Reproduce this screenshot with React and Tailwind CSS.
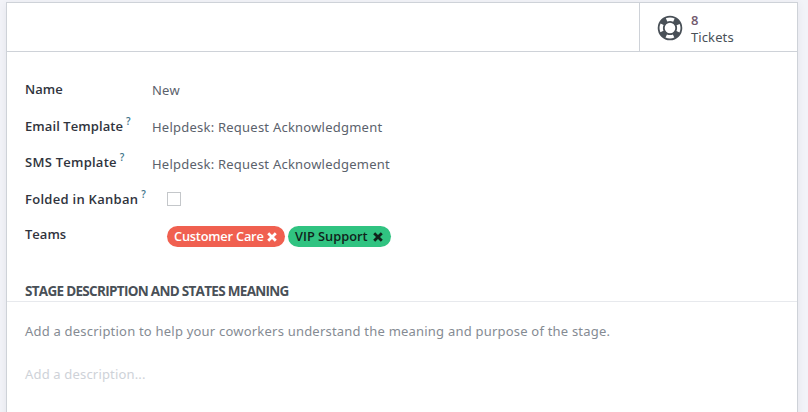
import React from 'react';

function LifeRing() {
  return (
    <svg width="26" height="26" viewBox="0 0 26 26" fill="none" stroke="#495057">
      <circle cx="13" cy="13" r="8.8" strokeWidth="7" />
      <circle cx="13" cy="13" r="8.8" stroke="#fff" strokeWidth="3.4" strokeDasharray="7.6 6.223" strokeDashoffset="3.8" />
    </svg>
  );
}

function Cross() {
  return (
    <svg width="10" height="10" viewBox="0 0 10 10" stroke="currentColor" strokeWidth="2.8">
      <path d="M1.2 1.2 8.8 8.8M8.8 1.2 1.2 8.8" />
    </svg>
  );
}

function Row({ label, help, className = '', labelClass = '', children }) {
  return (
    <div className={`flex ${className}`}>
      <div className="flex w-[127px] shrink-0 whitespace-nowrap leading-5">
        <span className={`font-semibold text-[#30343d] ${labelClass}`}>{label}</span>
        {help && <span className="-mt-[5px] ml-[3px] text-[10px] font-semibold text-[#3d7389]">?</span>}
      </div>
      {children}
    </div>
  );
}

function Value({ children, className = 'mt-px' }) {
  return <span className={`font-['Noto_Sans',sans-serif] leading-5 tracking-[0.23px] ${className}`}>{children}</span>;
}

function Tag({ children, className }) {
  return (
    <span className={`flex h-[21px] items-center justify-between rounded-full pr-2 pl-[7px] text-[12.8px] font-semibold leading-5 whitespace-nowrap ${className}`}>
      <span className="-mt-px">{children}</span>
      <Cross />
    </span>
  );
}

export default function App() {
  return (
    <div className="h-[412px] w-[808px] overflow-hidden bg-[#f2f3f8] pt-0.5 pl-1.5 font-['Open_Sans','Noto_Sans',sans-serif] text-[13px] text-[#5b626c]">
      <main className="h-[430px] w-[792px] border border-[#ced2d8] bg-white shadow-[0_2px_8px_rgba(60,65,90,0.08)]">
        <header className="flex h-[49px] justify-end border-b border-[#ced2d8]">
          <button className="flex w-[158px] items-center border-l border-[#ced2d8] pt-0.5 pl-[17px] text-left">
            <LifeRing />
            <span className="mt-px ml-2 flex flex-col leading-[17px]">
              <span className="font-semibold text-[#71596d]">8</span>
              <span className="font-['Noto_Sans',sans-serif] tracking-[0.1px] text-[#495057]">Tickets</span>
            </span>
          </button>
        </header>
        <section className="px-[18px] pt-[27px]">
          <Row label="Name" className="h-[37px]"><Value>New</Value></Row>
          <Row label="Email Template" labelClass="tracking-[0.08px]" help className="h-9"><Value>Helpdesk: Request Acknowledgment</Value></Row>
          <Row label="SMS Template" labelClass="tracking-[0.25px]" help className="h-[37px]"><Value className="mt-0.5">Helpdesk: Request Acknowledgement</Value></Row>
          <Row label="Folded in Kanban" labelClass="tracking-[0.28px]" help className="h-[35px]"><span className="mt-[3px] ml-[15px] size-3.5 border border-[#c4c7ca]" /></Row>
          <Row label="Teams" className="h-[57px]">
            <div className="mt-[2px] ml-[15px] flex gap-[3px]">
              <Tag className="w-[118px] bg-[#f06050] tracking-[-0.2px] text-white">Customer Care</Tag>
              <Tag className="w-[103px] bg-[#30c381] text-[#10241b]">VIP Support</Tag>
            </div>
          </Row>
        </section>
        <h2 className="h-[21px] border-b border-[#e7e9ed] pl-[18px] text-[13.5px] leading-5 font-bold tracking-[-0.7px] text-[#495057]">STAGE DESCRIPTION AND STATES MEANING</h2>
        <p className="mt-[19px] pl-[18px] font-['Noto_Sans',sans-serif] leading-5 tracking-[0.21px] text-[#858b93]">Add a description to help your coworkers understand the meaning and purpose of the stage.</p>
        <p className="mt-[23px] pl-[18px] font-['Noto_Sans',sans-serif] leading-5 tracking-[0.17px] text-[#ced2d8]">Add a description...</p>
      </main>
    </div>
  );
}
